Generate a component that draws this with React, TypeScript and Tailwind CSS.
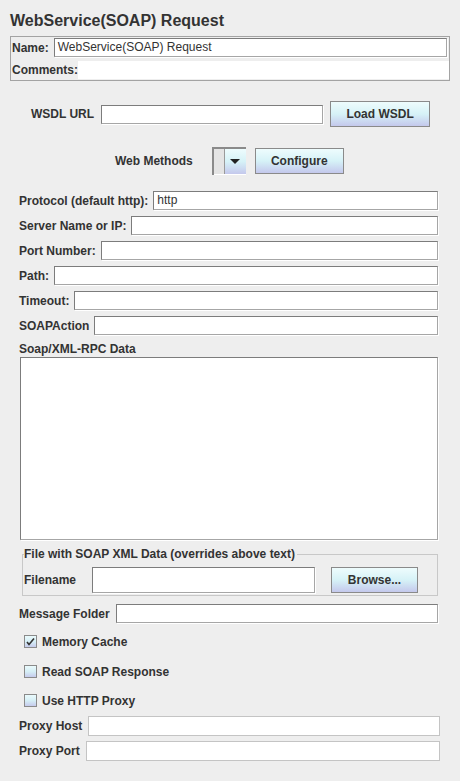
import React from "react";

const field =
  "h-[19px] bg-white border border-t-[#7c7c7c] border-l-[#7c7c7c] border-r-[#a6a6a6] border-b-[#a6a6a6] shadow-[1px_1px_0_#ffffff] px-[3px] text-[12px] font-normal leading-[17px] text-[#333333]";
const disabledField = "h-[20px] bg-white border border-[#c4c4c4]";
const btn =
  "border border-[#8a8a8a] bg-gradient-to-b from-[#eefcfd] via-[#d6f2f7] to-[#c4c8ec] text-[12px] font-bold text-[#333333] flex items-center justify-center";

function Row({ label, top, value }: { label: string; top: number; value?: string }) {
  return (
    <div className={`flex items-center h-[19px] pl-[19px] pr-[22px] ${top ? "mt-[6px]" : ""}`}>
      <span className="mr-[5px] whitespace-nowrap">{label}</span>
      <div className={`flex-1 ${field}`}>{value}</div>
    </div>
  );
}

function Check({ label, checked, mt }: { label: string; checked?: boolean; mt: string }) {
  return (
    <div className={`flex items-center h-[13px] pl-[24px] ${mt}`}>
      <div className="w-[13px] h-[13px] border border-[#8a8a8a] bg-gradient-to-b from-[#eafafc] via-[#d6eff6] to-[#c6cbec] flex items-center justify-center">
        {checked && (
          <svg width="9" height="9" viewBox="0 0 9 9">
            <path d="M1 5 L3 7.5 L8 1.5" stroke="#333333" strokeWidth="1.6" fill="none" />
          </svg>
        )}
      </div>
      <span className="ml-[5px]">{label}</span>
    </div>
  );
}

export default function App() {
  return (
    <div className="w-[460px] h-[781px] bg-[#eeeeee] font-['Liberation_Sans',Arial,sans-serif] text-[12px] font-bold text-[#333333] overflow-hidden">
      <div className="h-[36px] pl-[10px] pt-[11px] text-[16px] leading-[19px]">WebService(SOAP) Request</div>

      <div className="mx-[10px] h-[45px] border border-[#a3a3a3] flex flex-col">
        <div className="flex items-center h-[19px] mt-[1px] pl-[1px] pr-[2px]">
          <span className="mr-[5px]">Name:</span>
          <div className={`flex-1 ${field}`}>WebService(SOAP) Request</div>
        </div>
        <div className="flex items-center h-[18px] mt-[4px] pl-[1px]">
          <span>Comments:</span>
          <div className="flex-1 h-[18px] bg-white" />
        </div>
      </div>

      <div className="flex items-center h-[26px] mt-[20px] pl-[31px]">
        <span className="mr-[7px]">WSDL URL</span>
        <div className={`w-[222px] ${field}`} />
        <div className={`ml-[7px] w-[100px] h-[26px] ${btn}`}>Load WSDL</div>
      </div>

      <div className="flex items-center h-[28px] mt-[20px] pl-[115px]">
        <span className="mr-[19px]">Web Methods</span>
        <div className="w-[34px] h-[28px] flex border-t-2 border-l-2 border-[#8a8a8a] bg-white">
          <div className="w-[11px] h-[25px] bg-[#e4e4e4] border-r border-[#9a9a9a]" />
          <div className="flex-1 h-[25px] bg-gradient-to-b from-[#eefcfd] via-[#d6f2f7] to-[#c4c8ec] flex items-center justify-center">
            <svg width="10" height="6" viewBox="0 0 10 6">
              <path d="M0 0 H10 L5 5 Z" fill="#222222" />
            </svg>
          </div>
        </div>
        <div className={`ml-[9px] w-[89px] h-[26px] ${btn}`}>Configure</div>
      </div>

      <div className="mt-[16px]">
        <Row label="Protocol (default http):" top={0} value="http" />
        <Row label="Server Name or IP:" top={1} />
        <Row label="Port Number:" top={1} />
        <Row label="Path:" top={1} />
        <Row label="Timeout:" top={1} />
        <Row label="SOAPAction" top={1} />
      </div>

      <div className="pl-[19px] mt-[6px] h-[16px] leading-[16px]">Soap/XML-RPC Data</div>
      <div className={`ml-[20px] mr-[22px] h-[183px] ${field.replace("h-[19px] ", "")}`} />

      <div className="relative mx-[22px] mt-[14px] h-[42px] border border-[#c8c8c8]">
        <span className="absolute -top-[8px] left-[1px] bg-[#eeeeee] pr-[2px] leading-[14px]">
          File with SOAP XML Data (overrides above text)
        </span>
        <div className="flex items-center h-[26px] mt-[12px] pl-[1px]">
          <span className="w-[68px]">Filename</span>
          <div className={`w-[223px] !h-[26px] ${field}`} />
          <div className={`ml-[16px] w-[87px] h-[26px] ${btn}`}>Browse...</div>
        </div>
      </div>

      <div className="flex items-center h-[19px] mt-[8px] pl-[19px] pr-[22px]">
        <span className="mr-[6px]">Message Folder</span>
        <div className={`flex-1 ${field}`} />
      </div>

      <Check label="Memory Cache" checked mt="mt-[12px]" />
      <Check label="Read SOAP Response" mt="mt-[17px]" />
      <Check label="Use HTTP Proxy" mt="mt-[16px]" />

      <div className="flex items-center h-[20px] mt-[9px] pl-[19px] pr-[20px]">
        <span className="mr-[6px]">Proxy Host</span>
        <div className={`flex-1 ${disabledField}`} />
      </div>
      <div className="flex items-center h-[20px] mt-[5px] pl-[19px] pr-[20px]">
        <span className="mr-[6px]">Proxy Port</span>
        <div className={`flex-1 ${disabledField}`} />
      </div>
    </div>
  );
}
